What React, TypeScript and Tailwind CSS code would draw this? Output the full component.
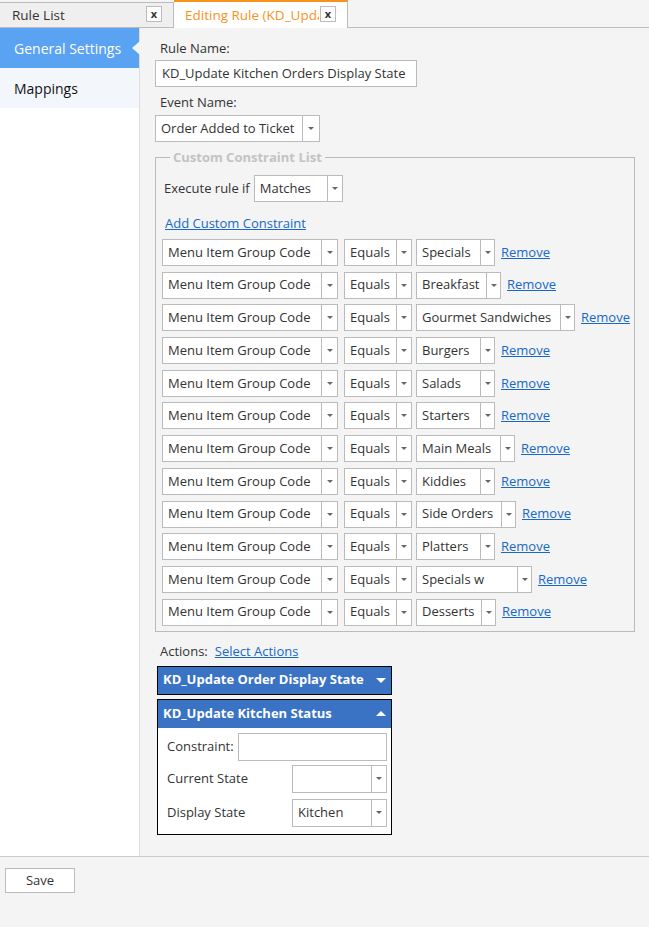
import React from 'react';

const rows = [
  { value: 'Specials', w: 'w-[79px]' },
  { value: 'Breakfast', w: 'w-[85px]' },
  { value: 'Gourmet Sandwiches', w: 'w-[159px]' },
  { value: 'Burgers', w: 'w-[79px]' },
  { value: 'Salads', w: 'w-[79px]' },
  { value: 'Starters', w: 'w-[79px]' },
  { value: 'Main Meals', w: 'w-[99px]' },
  { value: 'Kiddies', w: 'w-[79px]' },
  { value: 'Side Orders', w: 'w-[100px]' },
  { value: 'Platters', w: 'w-[79px]' },
  { value: 'Specials w', w: 'w-[116px]' },
  { value: 'Desserts', w: 'w-[80px]' },
];

const Caret = ({ className = '' }: { className?: string }) => (
  <span className={`w-0 h-0 border-l-[3px] border-r-[3px] border-t-[3px] border-l-transparent border-r-transparent border-t-[#666] ${className}`} />
);

const Select = ({ value, className = '', arrow = 'w-[15px]' }: { value: string; className?: string; arrow?: string }) => (
  <div className={`flex h-[27px] bg-white border border-[#bbb] shrink-0 ${className}`}>
    <div className="flex-1 flex items-center pl-[5px] overflow-hidden whitespace-nowrap">{value}</div>
    <div className={`${arrow} border-l border-[#bbb] flex items-center justify-center`}>
      <Caret />
    </div>
  </div>
);

const CloseBox = ({ top }: { top: string }) => (
  <span className={`absolute ${top} right-[11px] w-[16px] h-[16px] bg-white border border-[#bbb] flex items-center justify-center text-[11px] font-bold leading-none text-[#333] pb-[2px]`}>
    x
  </span>
);

export default function App() {
  return (
    <div className="w-[649px] h-[927px] bg-[#f4f4f4] text-[13px] text-[#333] font-['Open_Sans','Liberation_Sans',sans-serif] flex flex-col">
      {/* Tabs */}
      <div className="flex h-[28px] border-b border-[#bbb] shrink-0">
        <div className="relative mt-[2px] w-[174px] h-[25px] bg-[#efefef] border-t border-r border-[#bbb] flex items-center pl-[12px] text-[13.5px] text-[#333]">
          Rule List
          <CloseBox top="top-[3px]" />
        </div>
        <div className="relative w-[174px] h-[28px] bg-white border-t-2 border-[#f7931d] border-r border-r-[#bbb] flex items-center pl-[11px] text-[13.5px] text-[#f7931d]">
          <span className="w-[134px] overflow-hidden whitespace-nowrap">Editing Rule (KD_Update Kitchen</span>
          <CloseBox top="top-[4px]" />
        </div>
      </div>

      <div className="flex h-[829px] border-b border-[#ccc] shrink-0">
        {/* Sidebar */}
        <div className="w-[140px] bg-white border-r border-[#ddd] shrink-0 text-[14px]">
          <div className="relative h-[40px] bg-[#5aa2f2] text-white flex items-center pl-[14px]">
            General Settings
            <span className="absolute right-[-1px] top-[13px] w-0 h-0 border-t-[7px] border-b-[7px] border-r-[8px] border-t-transparent border-b-transparent border-r-[#f4f4f4]" />
          </div>
          <div className="h-[40px] bg-[#f3f7fc] text-[#111] flex items-center pl-[14px]">Mappings</div>
        </div>

        {/* Main */}
        <div className="flex-1 pl-[15px] pt-[11px]">
          <div className="ml-[5px] h-[18px] leading-[18px]">Rule Name:</div>
          <div className="mt-[3px] w-[262px] h-[27px] bg-white border border-[#bbb] flex items-center pl-[6px] whitespace-nowrap overflow-hidden">
            KD_Update Kitchen Orders Display State
          </div>
          <div className="ml-[5px] mt-[6px] h-[18px] leading-[18px]">Event Name:</div>
          <Select value="Order Added to Ticket" className="mt-[4px] w-[165px]" arrow="w-[17px]" />

          <fieldset className="mt-[6px] w-[480px] border border-[#bbb] pl-[6px] pb-[5px]">
            <legend className="ml-[8px] px-[3px] font-bold text-[#c3c3c3] leading-[18px]">Custom Constraint List</legend>
            <div className="mt-[9px] ml-[2px] flex items-center">
              <span className="mr-[4px]">Execute rule if</span>
              <Select value="Matches" className="w-[89px]" arrow="w-[15px]" />
            </div>
            <div className="mt-[12px] ml-[3px] h-[18px] leading-[18px]">
              <a className="text-[#1668c9] underline">Add Custom Constraint</a>
            </div>
            <div className="mt-[7px] flex flex-col gap-[5.7px]">
              {rows.map((r, i) => (
                <div key={i} className="flex items-center">
                  <Select value="Menu Item Group Code" className="w-[176px]" arrow="w-[16px]" />
                  <Select value="Equals" className="ml-[6px] w-[68px]" arrow="w-[15px]" />
                  <Select value={r.value} className={`ml-[4px] ${r.w}`} arrow="w-[14px]" />
                  <a className="ml-[6px] text-[#1668c9] underline">Remove</a>
                </div>
              ))}
            </div>
          </fieldset>

          <div className="mt-[10px] ml-[5px] h-[18px] leading-[18px] flex">
            <span>Actions:</span>
            <a className="ml-[7px] text-[#1668c9] underline">Select Actions</a>
          </div>

          <div className="mt-[6px] ml-[2px] w-[235px] h-[29px] bg-[#3a72c4] border border-black flex items-center justify-between pl-[5px] pr-[5px] text-white font-bold">
            KD_Update Order Display State
            <span className="w-0 h-0 border-l-[5px] border-r-[5px] border-t-[5px] border-l-transparent border-r-transparent border-t-white" />
          </div>

          <div className="mt-[4px] ml-[2px] w-[235px] border border-black bg-white">
            <div className="h-[28px] bg-[#3a72c4] flex items-center justify-between pl-[5px] pr-[5px] text-white font-bold">
              KD_Update Kitchen Status
              <span className="w-0 h-0 border-l-[5px] border-r-[5px] border-b-[5px] border-l-transparent border-r-transparent border-b-white" />
            </div>
            <div className="pl-[9px] pr-[4px] pt-[5px] pb-[7px] flex flex-col">
              <div className="flex items-center justify-between">
                <span>Constraint:</span>
                <div className="w-[149px] h-[28px] bg-white border border-[#bbb]" />
              </div>
              <div className="mt-[4px] flex items-center justify-between">
                <span>Current State</span>
                <Select value="" className="w-[95px] h-[28px]" arrow="w-[15px]" />
              </div>
              <div className="mt-[6px] flex items-center justify-between">
                <span>Display State</span>
                <Select value="Kitchen" className="w-[95px] h-[28px]" arrow="w-[15px]" />
              </div>
            </div>
          </div>
        </div>
      </div>

      {/* Footer */}
      <div className="pl-[5px] pt-[11px]">
        <button className="w-[70px] h-[25px] bg-white border border-[#bbb] text-[13px] text-[#333]">Save</button>
      </div>
    </div>
  );
}
